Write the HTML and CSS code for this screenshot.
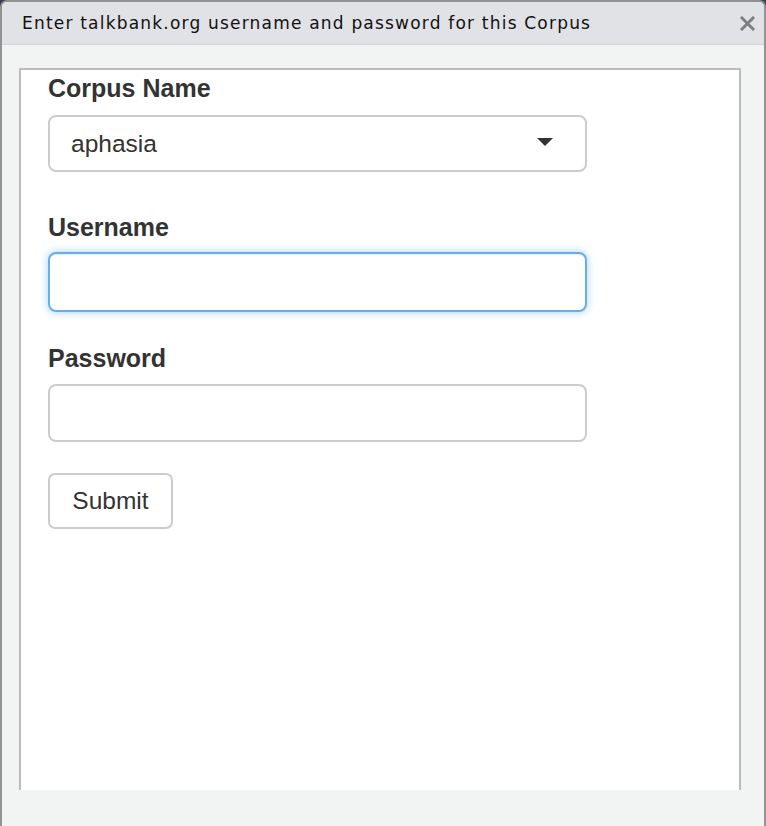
FILE: index.html
```html
<!DOCTYPE html>
<html lang="en">
<head>
<meta charset="utf-8">
<title>Corpus login</title>
<link rel="stylesheet" href="styles.css">
</head>
<body>
<div class="window">
  <div class="titlebar">
    <span class="title">Enter talkbank.org username and password for this Corpus</span>
    <span class="close" aria-label="close">
      <svg width="15" height="15" viewBox="0 0 15 15"><path d="M2 2 L13 13 M13 2 L2 13" stroke="#7f7f7f" stroke-width="3" stroke-linecap="square" fill="none"/></svg>
    </span>
  </div>
  <div class="content">
    <div class="panel">
      <div class="group first">
        <label class="label">Corpus Name</label>
        <div class="select">
          <span class="select-value">aphasia</span>
          <span class="caret"></span>
        </div>
      </div>
      <div class="group second">
        <label class="label">Username</label>
        <div class="input focused"></div>
      </div>
      <div class="group third">
        <label class="label">Password</label>
        <div class="input"></div>
      </div>
      <button class="btn">Submit</button>
    </div>
  </div>
</div>
</body>
</html>
```
FILE: styles.css
```css
html, body {
  margin: 0;
  padding: 0;
  background: #2f4257;
}
body {
  width: 766px;
  height: 826px;
  overflow: hidden;
  font-family: "Liberation Sans", Arial, sans-serif;
  color: #333;
}
.window {
  box-sizing: border-box;
  width: 766px;
  height: 826px;
  border: 2px solid #939393;
  border-bottom: none;
  border-radius: 7px 7px 0 0;
  background: #f2f4f3;
  overflow: hidden;
}
.titlebar {
  height: 42px;
  background: #e1e2e6;
  border-bottom: 1px solid #d3d5d8;
  display: flex;
  align-items: center;
  justify-content: space-between;
  padding: 0 9px 0 20px;
}
.title {
  font-family: "DejaVu Sans", "Liberation Sans", sans-serif;
  font-size: 17px;
  color: #111;
  letter-spacing: 1.2px;
}
.close {
  display: flex;
  width: 15px;
  height: 15px;
}
.content {
  padding: 23px 23px 0 17px;
}
.panel {
  box-sizing: border-box;
  width: 722px;
  height: 722px;
  background: #fff;
  border: 2px solid #bcbcbc;
  border-bottom: none;
  padding: 3px 0 0 27px;
}
.group {
  display: flex;
  flex-direction: column;
  align-items: flex-start;
}
.second { margin-top: 40px; }
.third { margin-top: 31px; }
.label {
  font-weight: bold;
  font-size: 25px;
  line-height: 30px;
  color: #333;
}
.first .label { margin-bottom: 12px; }
.second .label { margin-bottom: 10px; }
.third .label { margin-bottom: 11px; }
.select, .input {
  box-sizing: border-box;
  width: 539px;
  height: 58px;
  border: 2px solid #cccccc;
  border-radius: 8px;
  background: #fff;
}
.select {
  height: 57px;
  display: flex;
  align-items: center;
  justify-content: space-between;
  padding: 0 32px 0 21px;
}
.select-value {
  font-size: 24.5px;
  color: #333;
}
.caret {
  width: 0;
  height: 0;
  border-left: 8.5px solid transparent;
  border-right: 8.5px solid transparent;
  border-top: 8.5px solid #333;
  margin-top: -3px;
}
.input.focused {
  height: 60px;
  border-color: #66afe9;
  box-shadow: inset 0 1px 1px rgba(0,0,0,.075), 0 0 8px rgba(102,175,233,.6);
}
.btn {
  display: block;
  box-sizing: border-box;
  margin-top: 31px;
  width: 125px;
  height: 56px;
  border: 2px solid #cccccc;
  border-radius: 7px;
  background: #fff;
  font-family: "Liberation Sans", Arial, sans-serif;
  font-size: 24.5px;
  color: #333;
  padding: 0;
}
```
